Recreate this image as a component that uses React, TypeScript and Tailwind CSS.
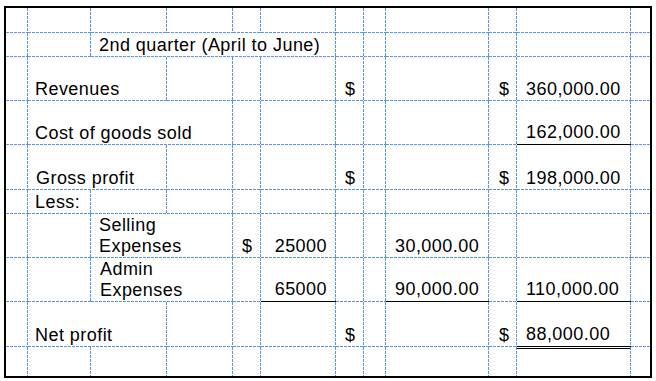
import React from "react";

type Cell = {
  span?: number;
  text?: React.ReactNode;
  pad?: string;
  right?: boolean;
  under?: boolean;
  double?: boolean;
};

const spanClass: Record<number, string> = {
  1: "",
  2: "col-span-2",
  3: "col-span-3",
  4: "col-span-4",
};

// dashed gridlines drawn as gradients (3px dash, 1px gap)
const lineBoth =
  "[background:repeating-linear-gradient(to_bottom,#5b96e0_0_3px,transparent_3px_4px)_right_top/1px_100%_no-repeat,repeating-linear-gradient(to_right,#5b96e0_0_3px,transparent_3px_4px)_left_bottom/100%_1px_no-repeat]";
const lineRight =
  "[background:repeating-linear-gradient(to_bottom,#5b96e0_0_3px,transparent_3px_4px)_right_top/1px_100%_no-repeat]";
const lineBottom =
  "[background:repeating-linear-gradient(to_right,#5b96e0_0_3px,transparent_3px_4px)_left_bottom/100%_1px_no-repeat]";

const empty = (n: number): Cell[] => Array.from({ length: n }, () => ({}));

// one array per sheet row, cells add up to 12 columns
const rows: Cell[][] = [
  empty(12),
  [{}, {}, { span: 4, text: "2nd quarter (April to June)", pad: "pl-[8px]" }, ...empty(6)],
  [
    {},
    { span: 2, text: "Revenues", pad: "pl-[7px]" },
    {},
    {},
    {},
    { text: "$", pad: "pl-[9px]" },
    {},
    {},
    { text: "$", pad: "pl-[10px]" },
    { text: "360,000.00", pad: "pl-[9px]" },
    {},
  ],
  [
    {},
    { span: 3, text: "Cost of goods sold", pad: "pl-[7px]" },
    ...empty(6),
    { text: "162,000.00", pad: "pl-[9px]", under: true },
    {},
  ],
  [
    {},
    { span: 2, text: "Gross profit", pad: "pl-[8px]" },
    {},
    {},
    {},
    { text: "$", pad: "pl-[9px]" },
    {},
    {},
    { text: "$", pad: "pl-[10px]" },
    { text: "198,000.00", pad: "pl-[9px]" },
    {},
  ],
  [{}, { text: "Less:", pad: "pl-[7px]" }, ...empty(10)],
  [
    {},
    {},
    {
      span: 2,
      text: (
        <>
          Selling
          <br />
          Expenses
        </>
      ),
      pad: "pl-[8px]",
    },
    { text: "$", pad: "pl-[9px]" },
    { text: "25000", pad: "pr-[9px]", right: true },
    {},
    {},
    { text: "30,000.00", pad: "pl-[9px]" },
    {},
    {},
    {},
  ],
  [
    {},
    {},
    {
      span: 2,
      text: (
        <>
          Admin
          <br />
          Expenses
        </>
      ),
      pad: "pl-[9px]",
    },
    {},
    { text: "65000", pad: "pr-[9px]", right: true, under: true },
    {},
    {},
    { text: "90,000.00", pad: "pl-[9px]", under: true },
    {},
    { text: "110,000.00", pad: "pl-[9px]", under: true },
    {},
  ],
  [
    {},
    { span: 2, text: "Net profit", pad: "pl-[7px]" },
    {},
    {},
    {},
    { text: "$", pad: "pl-[9px]" },
    {},
    {},
    { text: "$", pad: "pl-[10px]" },
    { text: "88,000.00", pad: "pl-[9px]", under: true },
    {},
  ],
  [...empty(10), { double: true }, {}],
];

export default function App() {
  return (
    <div className="w-[656px] h-[381px] bg-white pl-[4px] pt-[6px] font-['Liberation_Sans',Arial,sans-serif] text-[18px] tracking-[0.45px] text-black">
      <div className="w-[648px] border-2 border-black">
        <div className="grid grid-cols-[22px_63px_76px_66px_28px_75px_28px_22px_103px_28px_114px_19px] grid-rows-[25px_24px_44px_44px_45px_24px_44px_44px_45px_29px]">
          {rows.map((row, r) => {
            let col = 0;
            return row.map((cell, i) => {
              const span = cell.span ?? 1;
              col += span;
              const lastCol = col === 12;
              const lastRow = r === rows.length - 1;
              let lines = "";
              if (cell.under) lines = `${lineRight} border-b border-black`;
              else if (!lastCol && !lastRow) lines = lineBoth;
              else if (!lastCol) lines = lineRight;
              else if (!lastRow) lines = lineBottom;
              return (
                <div
                  key={`${r}-${i}`}
                  className={[
                    spanClass[span],
                    "flex flex-col whitespace-nowrap leading-[21px]",
                    cell.double ? "justify-start" : "justify-end pb-[1px]",
                    cell.right ? "items-end" : "items-start",
                    lines,
                    cell.pad ?? "",
                  ].join(" ")}
                >
                  {cell.double ? <div className="mt-[1px] h-px w-[113px] bg-black" /> : cell.text}
                </div>
              );
            });
          })}
        </div>
      </div>
    </div>
  );
}
